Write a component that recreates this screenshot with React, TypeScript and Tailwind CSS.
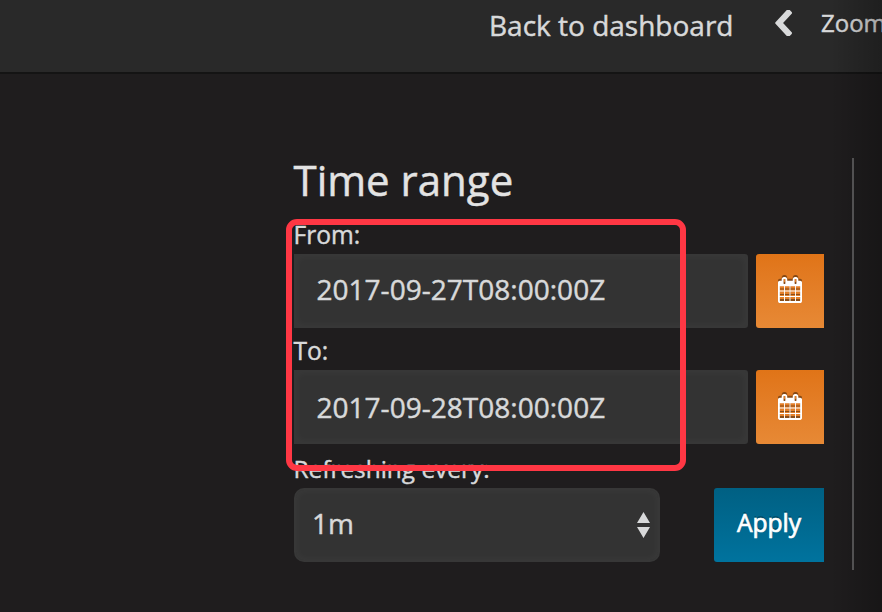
import React from "react";

function ChevronLeft() {
  return (
    <svg className="block h-[26px] w-[17px] shrink-0" viewBox="142 90 1048 1484" preserveAspectRatio="none" fill="#d8d9da">
      <path d="M1171 301l-531 531 531 531q19 19 19 45t-19 45l-166 166q-19 19-45 19t-45-19l-742-742q-19-19-19-45t19-45l742-742q19-19 45-19t45 19l166 166q19 19 19 45t-19 45z" />
    </svg>
  );
}

function CalendarIcon() {
  return (
    <svg className="block h-[26px] w-6 overflow-visible drop-shadow-[0_-1.5px_0_rgba(0,0,0,0.4)]" viewBox="0 0 1664 1792" fill="#fff">
      <path d="M128 1664h288v-288h-288v288zM480 1664h320v-288h-320v288zM128 1312h288v-320h-288v320zM480 1312h320v-320h-320v320zM128 928h288v-288h-288v288zM864 1664h320v-288h-320v288zM480 928h320v-288h-320v288zM1248 1664h288v-288h-288v288zM864 1312h320v-320h-320v320zM512 448v-288q0-13-9.5-22.5t-22.5-9.5h-64q-13 0-22.5 9.5t-9.5 22.5v288q0 13 9.5 22.5t22.5 9.5h64q13 0 22.5-9.5t9.5-22.5zM1248 1312h288v-320h-288v320zM864 928h320v-288h-320v288zM1248 928h288v-288h-288v288zM1280 448v-288q0-13-9.5-22.5t-22.5-9.5h-64q-13 0-22.5 9.5t-9.5 22.5v288q0 13 9.5 22.5t22.5 9.5h64q13 0 22.5-9.5t9.5-22.5zM1664 384v1280q0 52-38 90t-90 38h-1408q-52 0-90-38t-38-90v-1280q0-52 38-90t90-38h128v-96q0-66 47-113t113-47h64q66 0 113 47t47 113v96h384v-96q0-66 47-113t113-47h64q66 0 113 47t47 113v96h128q52 0 90 38t38 90z" />
    </svg>
  );
}

function DateField({ value, valueClass, iconClass }: { value: string; valueClass: string; iconClass: string }) {
  return (
    <div className="flex h-[74px] gap-2">
      <div className={`flex w-[454px] items-center rounded-r-[3px] border-2 border-[#373737] bg-[#333] pl-[20.5px] text-[28px] tracking-[0.02px] whitespace-nowrap shadow-[inset_0_0_10px_rgba(255,255,255,0.04)] ${valueClass}`}>
        {value}
      </div>
      <button className={`flex w-[68px] items-center justify-center rounded-l-[3px] bg-linear-to-b from-[#e07417] to-[#e78935] ${iconClass}`}>
        <CalendarIcon />
      </button>
    </div>
  );
}

export default function App() {
  return (
    <div className="relative flex h-[612px] w-[882px] flex-col overflow-hidden bg-[#1f1d1e] font-['Open_Sans',sans-serif] text-[#d8d9da] [-webkit-text-stroke:0.45px]">
      <header className="flex h-[74px] shrink-0 items-start border-b-2 border-[#141414] bg-[#292929] pl-[489px] whitespace-nowrap">
        <span className="w-[286px] shrink-0 pt-[6px] text-[28px] leading-[38px]">Back to dashboard</span>
        <div className="w-[46px] shrink-0 pt-[10px]">
          <ChevronLeft />
        </div>
        <span className="pt-[7px] text-[24px] leading-[32px]">Zoom</span>
      </header>

      <main className="flex pt-[84px] pl-[294px]">
        <section className="flex h-[412px] w-[560px] flex-col border-r-2 border-[#5c5b5c]">
          <h2 className="-ml-[0.5px] h-[60px] text-[42px] leading-[44px] whitespace-nowrap text-[#e3e3e3]">Time range</h2>
          <label className="-ml-[0.5px] h-9 text-[24.6px] leading-[34px]">From:</label>
          <DateField value="2017-09-27T08:00:00Z" valueClass="pb-1" iconClass="pb-[3px]" />
          <label className="-ml-[0.5px] h-[42px] pt-[6px] text-[24.6px] leading-[34px]">To:</label>
          <DateField value="2017-09-28T08:00:00Z" valueClass="pb-0" iconClass="pb-px" />
          <label className="-ml-[0.5px] h-11 pt-2 text-[24.4px] leading-[34px]">Refreshing every:</label>
          <div className="flex h-[74px] w-[530px] justify-between">
            <div className="flex w-[366px] items-center justify-between rounded-[10px] border-2 border-[#373737] bg-[#333] pr-2 pl-4 text-[28px] shadow-[inset_0_0_10px_rgba(255,255,255,0.04)]">
              <span className="pb-1">1m</span>
              <svg className="h-[26px] w-[13px]" viewBox="0 0 13 26" fill="#d8d9da">
                <path d="M6.5 0L13 11H0zM0 15H13L6.5 26z" />
              </svg>
            </div>
            <button className="flex w-[110px] items-center justify-center rounded-l-[3px] bg-linear-to-b from-[#006083] to-[#00739e] pb-[3px] text-[24.6px] text-white [-webkit-text-stroke:0.7px] [text-shadow:0_-2px_0_rgba(0,0,0,0.25)]">
              Apply
            </button>
          </div>
        </section>
      </main>

      <div className="pointer-events-none absolute top-[219px] left-[286px] h-[252px] w-[400px] rounded-[11px] border-[6px] border-[#ff3744]" />
      <div className="pointer-events-none absolute inset-y-0 right-0 w-[52px] bg-linear-to-r from-transparent to-black/25" />
    </div>
  );
}
